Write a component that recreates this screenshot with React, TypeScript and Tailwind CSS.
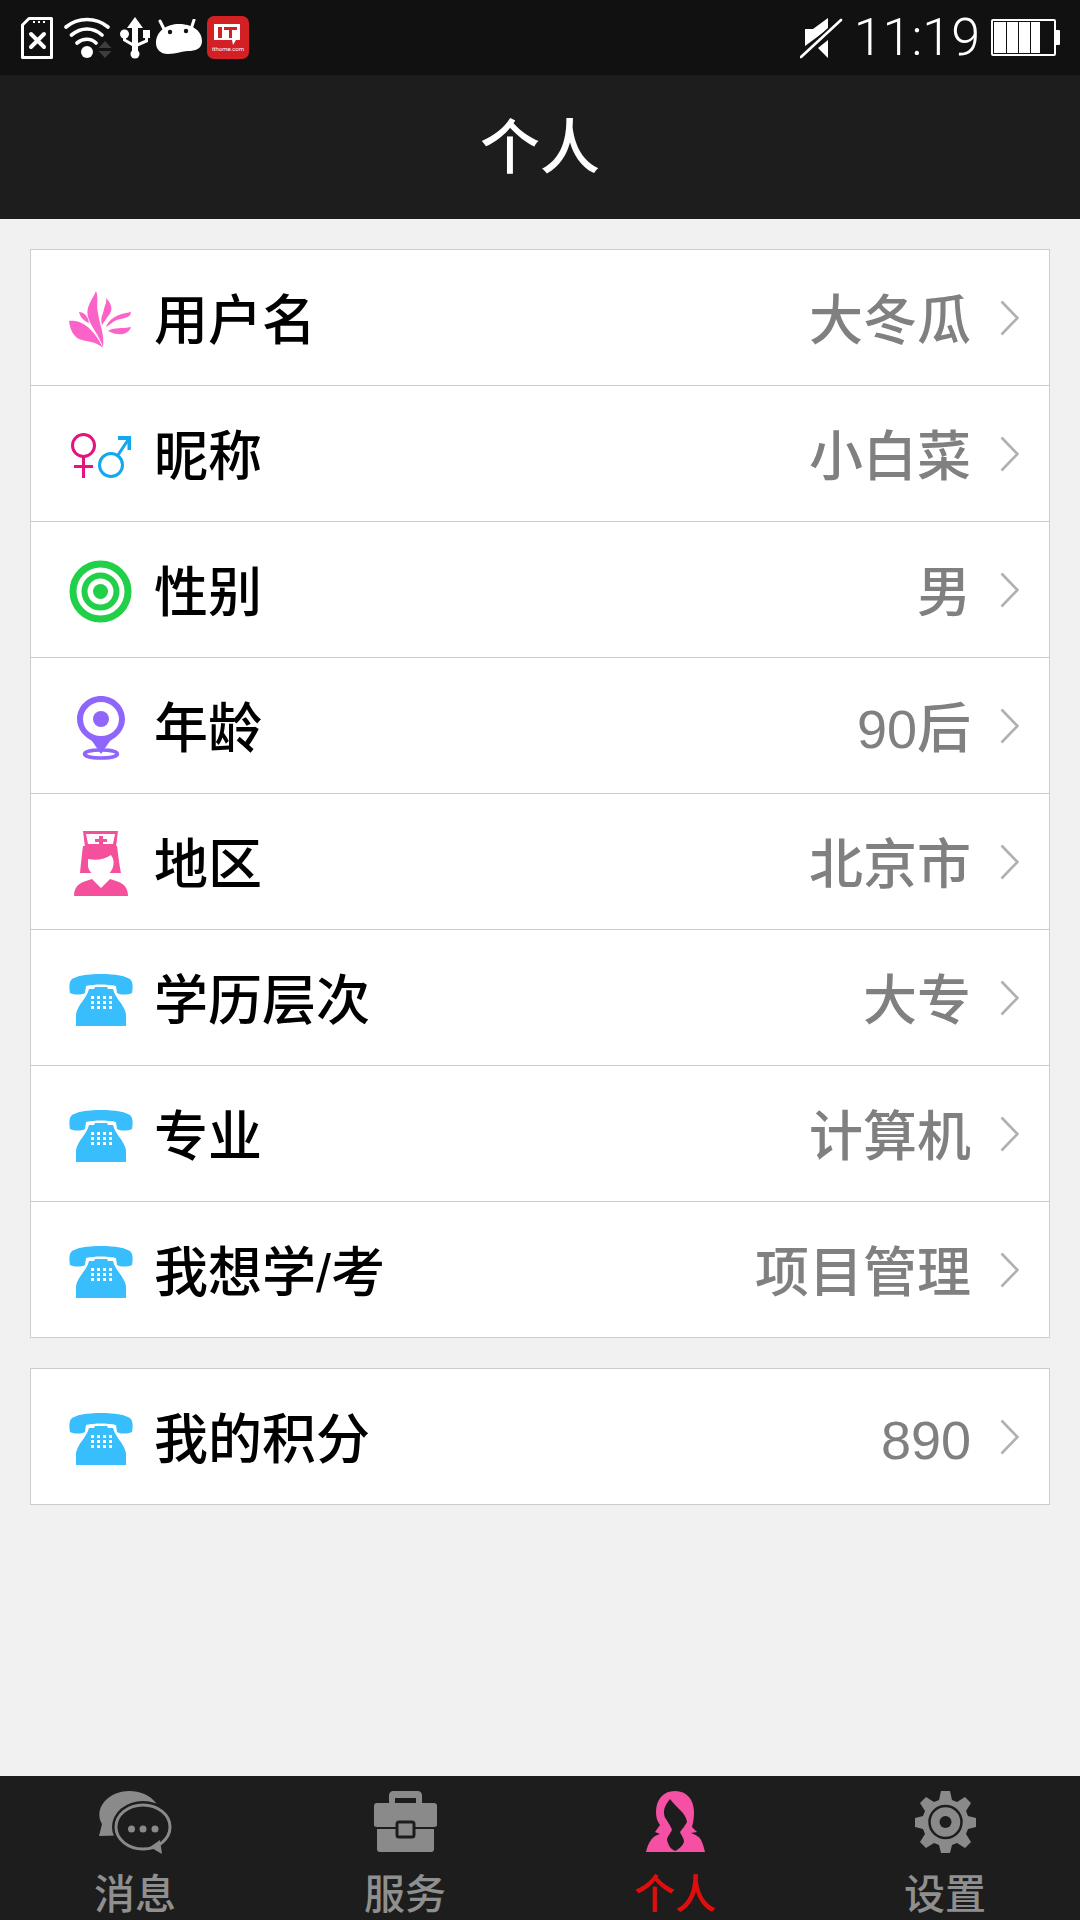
import React from "react";

const FONT = "font-['Liberation_Sans','Noto_Sans_CJK_SC',sans-serif]";

function SdIcon() {
  return (
    <svg width="34" height="42" viewBox="0 0 34 42" className="ml-[20px] mt-[17px] shrink-0">
      <path d="M9 1.500H31.500V40.500H2.500V8Z" fill="none" stroke="#fff" strokeWidth="3" strokeLinejoin="round" />
      <path d="M14 4v2M19 4v2M24 4v2" stroke="#fff" strokeWidth="2" />
      <path d="M11 17L24 30M24 17L11 30" stroke="#fff" strokeWidth="4" strokeLinecap="round" />
    </svg>
  );
}

function WifiIcon() {
  return (
    <svg width="48" height="42" viewBox="0 0 48 42" className="ml-[10px] mt-[17px] shrink-0">
      <path d="M2 10C14 0 32 0 44 10M7.500 18C17 10 29 10 38 18M13 26C19 21 27 21 32 26" fill="none" stroke="#fff" strokeWidth="3.600" strokeLinecap="round" />
      <circle cx="23" cy="35" r="6" fill="#fff" />
      <path d="M41 24L47.500 31H34.500ZM34.500 34H47.500L41 41Z" fill="#3d3d3d" />
    </svg>
  );
}

function UsbIcon() {
  return (
    <svg width="30" height="42" viewBox="0 0 30 42" className="ml-[8px] mt-[17px] shrink-0">
      <path d="M15 0L23 11H18V36H12V11H7Z" fill="#fff" />
      <circle cx="15" cy="37" r="4.500" fill="#fff" />
      <circle cx="4.500" cy="17" r="4.500" fill="#fff" />
      <rect x="23" y="13" width="7" height="8" fill="#fff" />
      <path d="M4.500 17V23L15 29L26.500 24V17" fill="none" stroke="#fff" strokeWidth="3" />
    </svg>
  );
}

function AndroidIcon() {
  return (
    <svg width="46" height="36" viewBox="0 0 46 36" className="ml-[6px] mt-[19px] shrink-0">
      <path d="M4 2L8 10M38 1L35 10" stroke="#fff" strokeWidth="3" strokeLinecap="round" />
      <path d="M23 5C35 5 46 11 46 22C46 30 39 32 32 32C26 32 21 35 12 35C4 35 0 30 0 24C0 12 11 5 23 5Z" fill="#fff" />
      <circle cx="14" cy="13" r="2.200" fill="#111" />
      <circle cx="30" cy="12" r="2.200" fill="#111" />
    </svg>
  );
}

function ItIcon() {
  return (
    <div className="ml-[5px] mt-[16px] flex h-[43px] w-[42px] shrink-0 flex-col items-center rounded-[7px] bg-[#d32024]">
      <svg width="28" height="22" viewBox="0 0 28 22" className="mt-[8px]">
        <path d="M0 0H26V16H22L19 21L18 16H0Z" fill="#fff" />
        <path d="M4 3H8V14H4ZM10 3H23V6H18V14H15V6H10Z" fill="#d32024" />
      </svg>
      <div className="mt-[-1px] font-['Roboto',sans-serif] text-[6px] leading-[7px] text-white">ithome.com</div>
    </div>
  );
}

function MuteIcon() {
  return (
    <svg width="44" height="42" viewBox="0 0 44 42" className="mt-[17px] shrink-0">
      <path d="M5 12H13L28 1V12L5 29ZM18 31L28 23V41Z" fill="#fff" />
      <path d="M1 40L41 3" stroke="#111" strokeWidth="6" />
      <path d="M1 40L41 3" stroke="#fff" strokeWidth="2.600" strokeLinecap="round" />
    </svg>
  );
}

function BatteryIcon() {
  return (
    <div className="ml-[11px] mr-[20px] mt-[19px] flex h-[37px] shrink-0 items-center">
      <div className="flex h-[37px] w-[65px] gap-[1px] rounded-[2px] border-2 border-white p-[1px]">
        <div className="h-full w-[12px] bg-white" />
        <div className="h-full w-[11px] bg-white" />
        <div className="h-full w-[11px] bg-white" />
        <div className="h-full w-[9px] bg-white" />
      </div>
      <div className="h-[15px] w-[4px] rounded-r-[1px] bg-white" />
    </div>
  );
}

function FlowerIcon() {
  return (
    <svg width="63" height="58" viewBox="0 0 63 58">
      <g fill="#fb63c8">
        <path d="M0 30C8 29 22 32 34 57C26 50 18 51 10 48C4 45 1 38 0 30Z" />
        <path d="M27 0C30 8 27 13 29 22C30 32 36 44 34 56C30 44 22 36 19 26C16 16 24 8 27 0Z" />
        <path d="M37 7C43 13 44 19 40 24C37 28 35 31 33 34C31 26 34 24 35 18C36 14 38 11 37 7Z" />
        <path d="M62 21C62 27 54 27 48 29C44 30 41 34 37 36C40 28 48 23 62 21Z" />
        <path d="M62 36C60 42 54 44 49 43C45 43 42 41 39 40C44 36 54 38 62 36Z" />
        <path d="M10 21C15 21 19 25 20 32C15 30 11 26 10 21Z" />
      </g>
    </svg>
  );
}

function GenderIcon() {
  return (
    <svg width="60" height="45" viewBox="0 0 60 45" fill="none" strokeWidth="3">
      <g stroke="#e6127e">
        <circle cx="12.500" cy="12.500" r="11" />
        <path d="M12.500 24V45M3 33.500H22" />
      </g>
      <g stroke="#12a8ee">
        <circle cx="40" cy="32" r="11.500" />
        <path d="M47 22L57 7" />
        <path d="M47 5H58.500V17" strokeWidth="4" />
      </g>
    </svg>
  );
}

function TargetIcon() {
  return (
    <svg width="63" height="63" viewBox="0 0 63 63" fill="none" stroke="#22cf49">
      <circle cx="31.500" cy="31.500" r="27.500" strokeWidth="7" />
      <circle cx="31.500" cy="31.500" r="16" strokeWidth="6" />
      <circle cx="31.500" cy="31.500" r="7.500" fill="#22cf49" stroke="none" />
    </svg>
  );
}

function PinIcon() {
  return (
    <svg width="48" height="64" viewBox="0 0 48 64">
      <path fillRule="evenodd" fill="#8f66fb" d="M24 0C37 0 48 10 48 23C48 34 40 41 33 45L24 58L15 45C8 41 0 34 0 23C0 10 11 0 24 0ZM24 6C14 6 6 14 6 23C6 33 14 40 24 40C34 40 42 33 42 23C42 14 34 6 24 6Z" />
      <circle cx="24" cy="23" r="8" fill="#8f66fb" />
      <ellipse cx="24" cy="58" rx="16.500" ry="4" fill="none" stroke="#8f66fb" strokeWidth="3.500" />
    </svg>
  );
}

function NurseIcon() {
  return (
    <svg width="56" height="65" viewBox="0 0 56 65">
      <path fillRule="evenodd" d="M10 0H45L43 16H12ZM13 3L15 13H40L42 3Z" fill="#f4509c" />
      <path d="M26 5H30V8H34V11H30V14H26V11H22V8H26Z" fill="#f4509c" />
      <path d="M10 15H44C45 22 46 32 48 42H7C8 32 9 22 10 15Z" fill="#f4509c" />
      <path d="M15 28C24 30 32 28 38 24C41 28 41 32 40 36C38 42 33 47 27 47C22 47 17 42 15 36Z" fill="#fff" />
      <path d="M1 65C1 54 8 51 19 48L28 57L37 48C48 51 55 54 55 65Z" fill="#f4509c" />
    </svg>
  );
}

function PhoneIcon() {
  const cells = [23, 29, 35, 41];
  const lines = [22, 27, 32];
  return (
    <svg width="64" height="52" viewBox="0 0 64 52">
      <path d="M32 0C46 0 58 2 62 6C64 9 64 14 63 19C58 21 52 21 48 19L47 12C38 10 26 10 17 12L16 19C12 21 6 21 1 19C0 14 0 9 2 6C6 2 18 0 32 0Z" fill="#38bdfd" />
      <path d="M20 15H25L26 13H38L39 15H44C46 24 55 30 57 40V52H7V40C9 30 18 24 20 15Z" fill="#38bdfd" />
      <g fill="#fff">
        {lines.map((y) =>
          cells.map((x) => <rect key={`${x}-${y}`} x={x - 1} y={y} width="3" height="3" />)
        )}
      </g>
    </svg>
  );
}

function ChatIcon() {
  return (
    <svg width="75" height="63" viewBox="0 0 75 63">
      <path d="M31 0C42 0 52 4 58 12C62 20 60 36 40 44L1 45L4 33C-5 18 10 0 31 0Z" fill="#8a8a8a" />
      <ellipse cx="45" cy="36" rx="31" ry="26" fill="#1d1d1d" />
      <ellipse cx="45" cy="36" rx="27" ry="22" fill="none" stroke="#8a8a8a" strokeWidth="3" />
      <path d="M52 56L64 63L62 49Z" fill="#8a8a8a" />
      <circle cx="33.500" cy="38" r="3.500" fill="#8a8a8a" />
      <circle cx="45" cy="38" r="3.500" fill="#8a8a8a" />
      <circle cx="57" cy="38" r="3.500" fill="#8a8a8a" />
    </svg>
  );
}

function CaseIcon() {
  return (
    <svg width="63" height="62" viewBox="0 0 63 62">
      <path d="M15 12V4C15 2 17 0 19 0H44C46 0 48 2 48 4V12H42V7H21V12Z" fill="#8a8a8a" />
      <path d="M3 12H60C62 12 63 13 63 15V34C63 35 62 36 60 36H3C1 36 0 35 0 34V15C0 13 1 12 3 12Z" fill="#8a8a8a" />
      <path d="M3 38H60V58C60 60 59 61 57 61H6C4 61 3 60 3 58Z" fill="#8a8a8a" />
      <rect x="23" y="31" width="17" height="15" rx="2" fill="#8a8a8a" stroke="#1d1d1d" strokeWidth="3" />
    </svg>
  );
}

function WomanIcon() {
  return (
    <svg width="59" height="62" viewBox="0 0 59 62">
      <path fillRule="evenodd" fill="#f550a3" d="M29 0C41 0 48 9 48 21C48 28 47 32 46 36L51 41L45 42C50 44 54 46 55 49C57 53 58 57 59 61H0C1 57 2 53 5 49C7 46 10 44 14 43L9 41L14 34C11 30 10 26 10 21C10 9 17 0 29 0ZM24 8C21 12 18 16 18 21C18 25 19 27 20 28C22 32 25 35 26 39C24 43 21 46 21 49C22 53 24 57 26 58C28 60 30 60 31 59C34 57 37 54 38 51C38 47 35 44 34 41C36 38 39 35 41 31C40 26 38 23 35 20C31 16 27 12 24 8Z" />
    </svg>
  );
}

function GearIcon() {
  return (
    <svg width="61" height="62" viewBox="0 0 61 62">
      <path fillRule="evenodd" fill="#8a8a8a" d="M26 0H35L37 9L42 11L50 6L56 12L51 20L53 25L61 27V36L53 38L51 43L56 51L50 57L42 52L37 54L35 62H26L24 54L19 52L11 57L5 51L10 43L8 38L0 36V27L8 25L10 20L5 12L11 6L19 11L24 9Z" />
      <circle cx="30.500" cy="31" r="16" fill="none" stroke="#1d1d1d" strokeWidth="2.500" />
      <circle cx="30.500" cy="31" r="6" fill="#1d1d1d" />
    </svg>
  );
}

function Chevron() {
  return (
    <svg width="19" height="36" viewBox="0 0 19 36" className="ml-[29px] shrink-0">
      <path d="M1.500 1.500L17.500 18L1.500 34.500" fill="none" stroke="#b0b0b0" strokeWidth="2.600" />
    </svg>
  );
}

type RowData = { icon: React.ReactNode; label: string; value: string };

const rows: RowData[] = [
  { icon: <FlowerIcon />, label: "用户名", value: "大冬瓜" },
  { icon: <GenderIcon />, label: "昵称", value: "小白菜" },
  { icon: <TargetIcon />, label: "性别", value: "男" },
  { icon: <PinIcon />, label: "年龄", value: "90后" },
  { icon: <NurseIcon />, label: "地区", value: "北京市" },
  { icon: <PhoneIcon />, label: "学历层次", value: "大专" },
  { icon: <PhoneIcon />, label: "专业", value: "计算机" },
  { icon: <PhoneIcon />, label: "我想学/考", value: "项目管理" },
];

function Row({ row, first }: { row: RowData; first?: boolean }) {
  return (
    <div className={`flex items-center pr-[30px] ${first ? "h-[135px]" : "h-[136px] border-t border-[#cccccc]"}`}>
      <div className="flex w-[123px] shrink-0 justify-center pl-[16px] pt-[4px]">{row.icon}</div>
      <div className="pt-[6px] text-[54px] font-medium leading-none text-black">{row.label}</div>
      <div className="ml-auto pt-[6px] text-[54px] font-medium leading-none text-[#808080]">{row.value}</div>
      <Chevron />
    </div>
  );
}

function Tab({ icon, label, active }: { icon: React.ReactNode; label: string; active?: boolean }) {
  return (
    <div className="flex flex-1 flex-col items-center">
      <div className="flex h-[66px] items-center">{icon}</div>
      <div className={`mt-[18px] text-[41px] font-medium leading-[44px] ${active ? "text-[#e00d0d]" : "text-[#8f8f8f]"}`}>{label}</div>
    </div>
  );
}

export default function App() {
  return (
    <div className={`flex h-[1920px] w-[1080px] flex-col overflow-hidden bg-[#f1f1f1] ${FONT}`}>
      <div className="flex h-[75px] shrink-0 bg-[#111111]">
        <SdIcon />
        <WifiIcon />
        <UsbIcon />
        <AndroidIcon />
        <ItIcon />
        <div className="ml-auto flex">
          <MuteIcon />
          <div className="ml-[10px] mt-[12px] font-['Roboto',sans-serif] text-[52px] font-light leading-[52px] text-white">11:19</div>
          <BatteryIcon />
        </div>
      </div>
      <div className="flex h-[144px] shrink-0 items-center justify-center bg-[#1d1d1d] pt-[4px] text-[60px] font-medium leading-none text-white">个人</div>

      <div className="mx-[30px] mt-[30px] border border-[#cccccc] bg-white">
        {rows.map((row, i) => (
          <Row key={row.label} row={row} first={i === 0} />
        ))}
      </div>
      <div className="mx-[30px] mt-[30px] border border-[#cccccc] bg-white">
        <Row first row={{ icon: <PhoneIcon />, label: "我的积分", value: "890" }} />
      </div>

      <div className="mt-auto flex h-[144px] shrink-0 bg-[#1d1d1d] pt-[13px]">
        <Tab icon={<ChatIcon />} label="消息" />
        <Tab icon={<CaseIcon />} label="服务" />
        <Tab icon={<WomanIcon />} label="个人" active />
        <Tab icon={<GearIcon />} label="设置" />
      </div>
    </div>
  );
}
